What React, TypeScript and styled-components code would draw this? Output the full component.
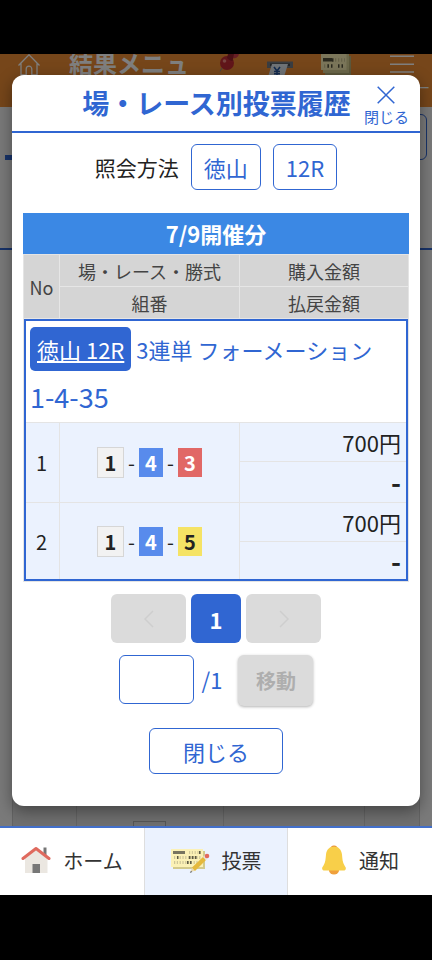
import React, { useState } from "react";
import styled, { createGlobalStyle } from "styled-components";

const blue = "#3066d2";
const line = "#e4e4e4";

const GlobalStyle = createGlobalStyle`
  *, *::before, *::after { box-sizing: border-box; }
  body { margin: 0; background: #000; }
  body, button, input { font-family: "Noto Sans CJK JP", "Noto Sans", sans-serif; }
  button { cursor: pointer; padding: 0; }
  h1, h2, p { margin: 0; }
`;

const Screen = styled.div`
  min-height: 100vh;
  padding: 54px 0 65px;
  display: flex;
  flex-direction: column;
  background: #000;
  color: #222;
`;

/* page below the dialog */
const Stage = styled.div`
  position: relative;
  flex: 1;
  display: flex;
  flex-direction: column;
  overflow: hidden;
  background: #f4f4f4;
`;

const PageHeader = styled.header`
  display: flex;
  align-items: flex-start;
  gap: 22px;
  height: 53px;
  padding: 0 2px 0 17px;
  background: #ec8c34;
`;

const PageTitle = styled.h1`
  flex: 1;
  margin-top: -5px;
  padding-left: 6px;
  font-size: 24px;
  line-height: 28px;
  font-weight: 700;
  color: #fff;
  white-space: nowrap;
`;

const Shortcuts = styled.div`
  display: flex;
  align-items: flex-start;
  gap: 28px;
`;

const MenuButton = styled.button`
  display: flex;
  flex-direction: column;
  align-items: center;
  gap: 4px;
  border: 0;
  background: none;
  color: #fff;
  font-size: 14px;
  line-height: 18px;
`;

const Filters = styled.section`
  height: 143px;
  padding: 7px 5px 0;
  display: flex;
  justify-content: space-between;
  align-items: flex-start;
  border-bottom: 2px solid ${blue};
`;

const TabMark = styled.div`
  width: 56px;
  height: 46px;
  border-bottom: 5px solid ${blue};
`;

const FilterBox = styled.div`
  width: 70px;
  height: 46px;
  border: 1px solid ${blue};
  border-radius: 6px;
`;

const BackList = styled.div`
  flex: 1;
  margin: 0 12px;
  display: grid;
  grid-template-columns: 64px 147px 141px 1fr;
  align-items: stretch;
  border: solid #c6c6c6;
  border-width: 0 1px;
  background: #dedede;
`;

const BackCell = styled.div`
  display: flex;
  align-items: flex-end;
  padding-left: 56px;
  border-right: 1px solid #c6c6c6;
  &:last-child { border-right: 0; }
`;

const BackTile = styled.div`
  width: 33px;
  height: 5px;
  border: 1px solid #aaa;
  border-bottom: 0;
`;

const Overlay = styled.div`
  position: absolute;
  inset: 0;
  padding: 21px 12px 20px;
  background: rgba(0, 0, 0, 0.5);
`;

/* dialog */
const Dialog = styled.section`
  padding-bottom: 32px;
  border-radius: 12px;
  background: #fff;
  box-shadow: 0 5px 16px rgba(0, 0, 0, 0.4);
`;

const DialogHeader = styled.header`
  display: grid;
  grid-template-columns: 1fr auto 1fr;
  align-items: center;
  height: 58px;
  padding: 0 11px 0 12px;
  border-bottom: 2px solid ${blue};
`;

const DialogTitle = styled.h2`
  grid-column: 2;
  font-size: 27px;
  line-height: 36px;
  font-weight: 700;
  color: ${blue};
  white-space: nowrap;
`;

const CloseIconButton = styled.button`
  justify-self: end;
  display: flex;
  flex-direction: column;
  align-items: center;
  gap: 4px;
  padding-top: 6px;
  border: 0;
  background: none;
  color: ${blue};
  font-size: 15px;
  line-height: 18px;
  white-space: nowrap;
`;

const DialogBody = styled.div`
  padding: 11px 11px 0;
  display: flex;
  flex-direction: column;
`;

const Method = styled.div`
  display: flex;
  justify-content: center;
  align-items: center;
  gap: 12px;
  font-size: 21px;
  line-height: 46px;
`;

const OutlineButton = styled.button<{ $wide?: boolean }>`
  height: 46px;
  padding: 0 ${(p) => (p.$wide ? 33 : 12)}px;
  border: 1px solid ${blue};
  border-radius: 6px;
  background: #fff;
  color: ${blue};
  font-size: 22px;
  line-height: 44px;
`;

const Banner = styled.div`
  margin-top: 23px;
  background: #3b88e4;
  color: #fff;
  font-size: 22px;
  line-height: 41px;
  font-weight: 700;
  text-align: center;
`;

const Table = styled.table`
  width: 100%;
  table-layout: fixed;
  border: 1px solid ${line};
  border-collapse: separate;
  border-spacing: 0;
`;

const Col = styled.col<{ $w: string }>`
  width: ${(p) => p.$w};
`;

const HeadCell = styled.th`
  height: 32px;
  padding: 0;
  border: solid #e6e6e6;
  border-width: 0 1px 1px 0;
  background: #d5d5d5;
  color: #444;
  font-size: 18px;
  line-height: 24px;
  font-weight: 400;
  &:last-child { border-right: 0; }
`;

const Bets = styled.tbody`
  outline: 2px solid ${blue};
  outline-offset: -2px;
`;

const SummaryCell = styled.td`
  padding: 8px 6px 0;
  color: ${blue};
  vertical-align: top;
  border-bottom: 1px solid ${line};
`;

const Kind = styled.p`
  display: flex;
  align-items: center;
  gap: 5px;
  font-size: 22px;
  line-height: 44px;
  white-space: nowrap;
`;

const RaceLink = styled.a`
  padding: 0 7px;
  border-radius: 5px;
  background: ${blue};
  color: #fff;
  text-decoration: underline;
`;

const Combo = styled.p`
  font-size: 27px;
  line-height: 51px;
`;

const Cell = styled.td<{ $h: number }>`
  height: ${(p) => p.$h}px;
  padding: 0;
  border: solid ${line};
  border-width: 0 1px 1px 0;
  background: #ebf2fe;
  text-align: center;
  font-size: 20px;
  line-height: 28px;
`;

const Amount = styled(Cell)<{ $bold?: boolean }>`
  padding-right: 7px;
  border-right: 0;
  text-align: right;
  font-size: ${(p) => (p.$bold ? 27 : 22)}px;
  font-weight: ${(p) => (p.$bold ? 700 : 400)};
`;

const Numbers = styled.span`
  display: flex;
  justify-content: center;
  align-items: center;
`;

const Dash = styled.span`
  width: 15px;
  text-align: center;
`;

const tileColors: Record<number, [string, string, string]> = {
  1: ["#f2f2f2", "#d6d6d6", "#222"],
  3: ["#e16866", "#e16866", "#fff"],
  4: ["#588bec", "#588bec", "#fff"],
  5: ["#f5e365", "#f5e365", "#222"],
};

const Tile = styled.span<{ $n: number }>`
  width: ${(p) => (p.$n === 1 ? 27 : 24)}px;
  border: 1px solid ${(p) => tileColors[p.$n][1]};
  background: ${(p) => tileColors[p.$n][0]};
  color: ${(p) => tileColors[p.$n][2]};
  font-weight: 700;
  line-height: ${(p) => (p.$n === 1 ? 29 : 27)}px;
`;

const Pager = styled.nav`
  display: flex;
  justify-content: center;
  gap: 5px;
  margin-top: 12px;
`;

const PageButton = styled.button<{ $current?: boolean }>`
  display: flex;
  align-items: center;
  justify-content: center;
  width: ${(p) => (p.$current ? 50 : 75)}px;
  height: 49px;
  border: 0;
  border-radius: 6px;
  background: ${(p) => (p.$current ? blue : "#dbdbdb")};
  color: ${(p) => (p.$current ? "#fff" : "#cecece")};
  font-size: 22px;
  font-weight: 700;
`;

const Jump = styled.form`
  display: flex;
  justify-content: center;
  align-items: flex-start;
  margin-top: 12px;
`;

const PageInput = styled.input`
  width: 75px;
  height: 49px;
  padding: 0 10px;
  border: 1px solid ${blue};
  border-radius: 6px;
  color: ${blue};
  font-size: 22px;
`;

const Total = styled.label`
  padding: 0 16px 0 8px;
  color: ${blue};
  font-size: 22px;
  line-height: 49px;
`;

const GoButton = styled.button`
  width: 75px;
  height: 51px;
  border: 0;
  border-radius: 6px;
  background: #dbdbdb;
  box-shadow: 0 1px 3px rgba(0, 0, 0, 0.3);
  color: #aeaeae;
  font-size: 20px;
  font-weight: 700;
`;

const Footer = styled.div`
  display: flex;
  justify-content: center;
  margin-top: 22px;
`;

/* bottom bar */
const BottomNav = styled.nav`
  display: grid;
  grid-template-columns: repeat(3, 1fr);
  border-top: 2px solid #426fca;
  background: #fff;
`;

const NavItem = styled.a<{ $active?: boolean }>`
  display: flex;
  align-items: center;
  justify-content: center;
  gap: 12px;
  height: 67px;
  padding-bottom: 3px;
  border: solid #dedede;
  border-width: 0 ${(p) => (p.$active ? 1 : 0)}px;
  background: ${(p) => (p.$active ? "#ebf2fe" : "#fff")};
  color: #333;
  font-size: 20px;
  text-decoration: none;
`;

const VoteTicket = () => (
  <svg width="39" height="28" viewBox="0 0 39 28" aria-hidden="true">
    <path d="M2 5h32v18H2z" fill="#d3ca8c" />
    <path d="M0 3h32v18H0z" fill="#fbf1b6" />
    <path d="M2 5h12v3H2z" fill="#77745f" />
    <g fill="none" strokeWidth="3">
      <path d="M18 6.500h12" stroke="#d4cc9c" strokeDasharray="1.200 1.600" />
      <path d="M3 11.500h27M3 16.500h25" stroke="#cdc598" strokeDasharray="1.200 1.600" />
      <path d="M6 11.500h1.500M18 11.500h1.500M21 11.500h1.500M24 11.500h1.500M16 16.500h1.500M19 16.500h1.500M28 6.500h1.500" stroke="#5c5943" />
    </g>
    <path d="M19.500 26l1.600-4.500 3 3.200z" fill="#e8d9b0" />
    <path d="M18.800 27l1.200-2.200 1.300 1.300z" fill="#666" />
    <path d="M21 21.500L32 11l3 3-11 11z" fill="#e5b93c" />
    <path d="M32 11l1.700-1.700 3 3L35 14z" fill="#e8e3d8" />
    <circle cx="36" cy="10" r="2.300" fill="#e26a5e" />
  </svg>
);

const HeaderTicket = () => (
  <svg width="31" height="24" viewBox="0 0 31 24" aria-hidden="true">
    <path d="M4 2h26v21H4z" fill="#b9b078" />
    <path d="M2 0h26v19H2z" fill="#d8d094" />
    <path d="M0 0h25.500v16H0z" fill="#f7edb4" />
    <path d="M2 4h9v3.500H2z" fill="#55523c" />
    <g fill="none" strokeWidth="3.600">
      <path d="M14 6h10M3 12h4" stroke="#cfc794" strokeDasharray="1.300 1.700" />
      <path d="M11 6h1.500M6.500 12h1.500M10 12h1.500M17 12h1.500M20.500 12h1.500" stroke="#55523c" />
    </g>
  </svg>
);

const House = () => (
  <svg width="30" height="28" viewBox="0 0 30 28" aria-hidden="true">
    <path d="M22.500 1.500h3V10h-3z" fill="#767676" />
    <path d="M15 4L4 12.500V27h22.500V12.500z" fill="#ebe7e1" />
    <path d="M2 12.500L15 2.500l13 10" fill="none" stroke="#df6a5e" strokeWidth="3" strokeLinecap="round" strokeLinejoin="round" />
    <path d="M11.500 18h7.500v9h-7.500z" fill="#777" />
  </svg>
);

const Bell = () => (
  <svg width="26" height="30" viewBox="0 0 26 30" aria-hidden="true">
    <ellipse cx="13" cy="4" rx="3.600" ry="3.500" fill="#e78a35" />
    <ellipse cx="13" cy="25.500" rx="5" ry="4" fill="#f0a03c" />
    <path d="M13 1.500C8.500 1.500 5.600 4.500 5 9.500c-.4 4-.5 8-2.500 11C1.300 22.300.8 23 1.300 24.200c.3.900 1 1.300 2 1.300h19.400c1 0 1.700-.4 2-1.300.5-1.200 0-1.900-1.200-3.700-2-3-2.100-7-2.500-11-.6-5-3.500-8-8-8z" fill="#f8cf49" />
  </svg>
);

const HomeOutline = () => (
  <svg width="24" height="22" viewBox="0 0 24 22" fill="none" stroke="#fff" strokeWidth="1.300" aria-hidden="true">
    <path d="M1.500 11.500L12 .8l10.500 10.700M4 9.500V21h5.200v-6c0-3.800 5.600-3.800 5.600 0v6H20V9.500" />
  </svg>
);

const Pin = () => (
  <svg width="20" height="18" viewBox="0 0 20 18" aria-hidden="true">
    <path d="M3 14l-2 3.500" stroke="#888" strokeWidth="1" />
    <path d="M9 0h11c-.5 3-3 4.500-7 4.500z" fill="#ce3c48" />
    <circle cx="8" cy="9" r="7" fill="#c22c34" />
    <path d="M9 0h6l-1.500 7c-2 0-4.500-1.500-5.500-3z" fill="#96202a" />
    <circle cx="5.500" cy="7" r="1.800" fill="#ee8880" />
  </svg>
);

const Cash = () => (
  <svg width="26" height="26" viewBox="0 0 26 26" aria-hidden="true">
    <path d="M0 7.500h26V14H0z" fill="#757b82" />
    <path d="M3 9.500h20v2.500H3z" fill="#464a50" />
    <path d="M5 10h16l-5 16H0z" fill="#dfe6ee" />
    <path d="M7 13l3 4 3-4M10 17v5M7 17.500h6M7 19.800h6" fill="none" stroke="#2858a0" strokeWidth="1.600" />
  </svg>
);

const bets = [
  { no: 1, numbers: [1, 4, 3], heights: [39, 41] },
  { no: 2, numbers: [1, 4, 5], heights: [39, 39] },
];

export default function App() {
  const [page, setPage] = useState("");
  return (
    <>
      <GlobalStyle />
      <Screen>
        <Stage>
          <PageHeader>
            <HomeOutline />
            <PageTitle>結果メニュ</PageTitle>
            <Shortcuts>
              <Pin />
              <Cash />
              <HeaderTicket />
            </Shortcuts>
            <MenuButton type="button">
              <svg width="24" height="20" viewBox="0 0 24 20" stroke="#fff" strokeWidth="1.500" aria-hidden="true">
                <path d="M0 2.200h24M0 10.200h24M0 18h24" />
              </svg>
              メニュー
            </MenuButton>
          </PageHeader>
          <Filters>
            <TabMark />
            <FilterBox />
          </Filters>
          <BackList>
            <BackCell />
            <BackCell><BackTile /></BackCell>
            <BackCell />
            <BackCell />
          </BackList>
          <Overlay>
            <Dialog role="dialog" aria-labelledby="dialog-title">
              <DialogHeader>
                <DialogTitle id="dialog-title">場・レース別投票履歴</DialogTitle>
                <CloseIconButton type="button">
                  <svg width="18" height="18" viewBox="0 0 18 18" fill="none" stroke="currentColor" strokeWidth="1.500" aria-hidden="true">
                    <path d="M.7.700l16.600 16.600M17.300.7L.7 17.300" />
                  </svg>
                  閉じる
                </CloseIconButton>
              </DialogHeader>
              <DialogBody>
                <Method>
                  <span>照会方法</span>
                  <OutlineButton type="button">徳山</OutlineButton>
                  <OutlineButton type="button">12R</OutlineButton>
                </Method>
                <Banner>7/9開催分</Banner>
                <Table>
                  <colgroup>
                    <Col $w="36px" />
                    <Col $w="auto" />
                    <Col $w="168px" />
                  </colgroup>
                  <thead>
                    <tr>
                      <HeadCell rowSpan={2}>No</HeadCell>
                      <HeadCell>場・レース・勝式</HeadCell>
                      <HeadCell>購入金額</HeadCell>
                    </tr>
                    <tr>
                      <HeadCell>組番</HeadCell>
                      <HeadCell>払戻金額</HeadCell>
                    </tr>
                  </thead>
                  <Bets>
                    <tr>
                      <SummaryCell colSpan={3}>
                        <Kind>
                          <RaceLink href="#race">徳山 12R</RaceLink>
                          <span>3連単 フォーメーション</span>
                        </Kind>
                        <Combo>1-4-35</Combo>
                      </SummaryCell>
                    </tr>
                    {bets.map((bet) => (
                      <React.Fragment key={bet.no}>
                        <tr>
                          <Cell rowSpan={2} $h={bet.heights[0] + bet.heights[1]}>{bet.no}</Cell>
                          <Cell rowSpan={2} $h={bet.heights[0] + bet.heights[1]}>
                            <Numbers>
                              {bet.numbers.map((n, i) => (
                                <React.Fragment key={n}>
                                  {i > 0 && <Dash>-</Dash>}
                                  <Tile $n={n}>{n}</Tile>
                                </React.Fragment>
                              ))}
                            </Numbers>
                          </Cell>
                          <Amount $h={bet.heights[0]}>700円</Amount>
                        </tr>
                        <tr>
                          <Amount $h={bet.heights[1]} $bold>-</Amount>
                        </tr>
                      </React.Fragment>
                    ))}
                  </Bets>
                </Table>
                <Pager aria-label="ページ">
                  <PageButton type="button" disabled aria-label="前へ">
                    <svg width="10" height="18" viewBox="0 0 10 18" fill="none" stroke="currentColor" strokeWidth="1.500" aria-hidden="true">
                      <path d="M9 1L1 9l8 8" />
                    </svg>
                  </PageButton>
                  <PageButton type="button" $current>1</PageButton>
                  <PageButton type="button" disabled aria-label="次へ">
                    <svg width="10" height="18" viewBox="0 0 10 18" fill="none" stroke="currentColor" strokeWidth="1.500" aria-hidden="true">
                      <path d="M1 1l8 8-8 8" />
                    </svg>
                  </PageButton>
                </Pager>
                <Jump onSubmit={(e) => e.preventDefault()}>
                  <PageInput id="page" inputMode="numeric" value={page} onChange={(e) => setPage(e.target.value)} />
                  <Total htmlFor="page">/1</Total>
                  <GoButton type="submit" disabled>移動</GoButton>
                </Jump>
                <Footer>
                  <OutlineButton type="button" $wide>閉じる</OutlineButton>
                </Footer>
              </DialogBody>
            </Dialog>
          </Overlay>
        </Stage>
        <BottomNav>
          <NavItem href="#home"><House />ホーム</NavItem>
          <NavItem href="#vote" $active><VoteTicket />投票</NavItem>
          <NavItem href="#notice"><Bell />通知</NavItem>
        </BottomNav>
      </Screen>
    </>
  );
}
